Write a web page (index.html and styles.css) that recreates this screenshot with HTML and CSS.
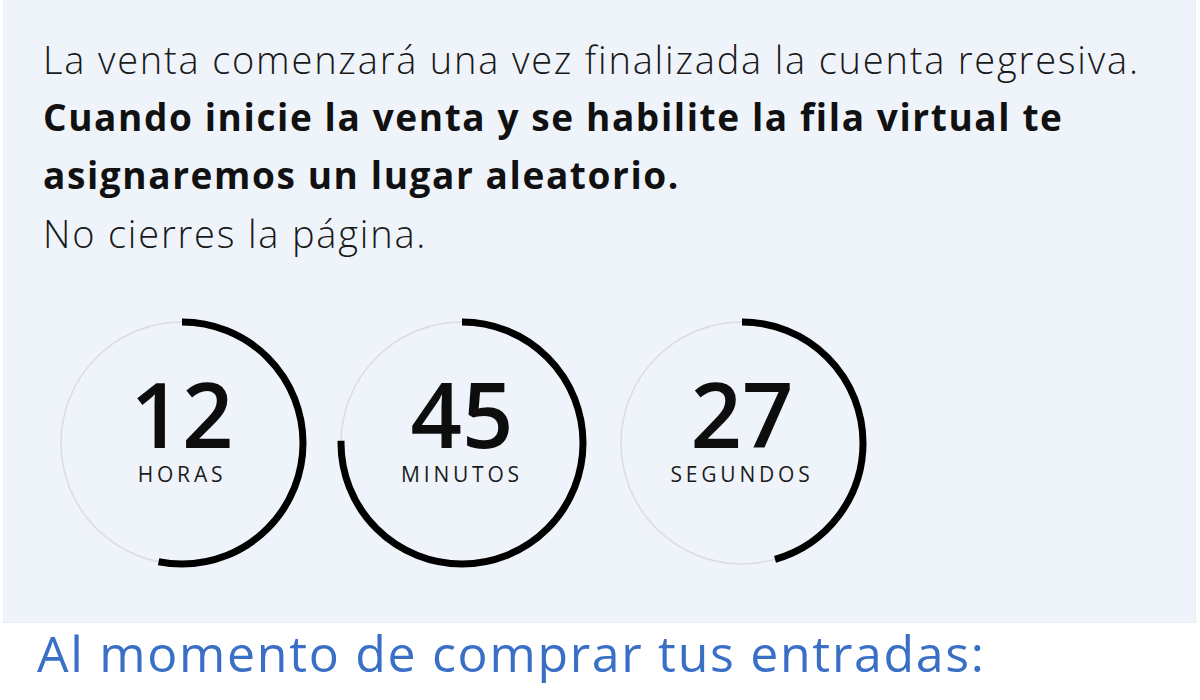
FILE: index.html
```html
<!DOCTYPE html>
<html lang="es">
<head>
  <meta charset="UTF-8">
  <title>Cuenta regresiva – Fila virtual</title>
  <link rel="stylesheet" href="styles.css">
</head>
<body>
  <!-- Aviso + cuenta regresiva -->
  <section class="countdown-box">
    <p class="notice">
      <span class="light">La venta comenzará una vez finalizada la cuenta regresiva.</span>
      <strong>Cuando inicie la venta y se habilite la fila virtual te asignaremos un lugar aleatorio.</strong>
      <span class="light">No cierres la página.</span>
    </p>

    <div class="timer">
      <!-- Horas: 12.75 / 24 -->
      <div class="ring">
        <svg class="ring-svg" viewBox="0 0 254 254">
          <circle class="track" cx="127" cy="127" r="121"></circle>
          <circle class="bar" cx="127" cy="127" r="121" pathLength="100" stroke-dasharray="53.1 100"></circle>
        </svg>
        <span class="ring-value">12</span>
        <span class="ring-label">HORAS</span>
      </div>
      <!-- Minutos: 45.45 / 60 -->
      <div class="ring">
        <svg class="ring-svg" viewBox="0 0 254 254">
          <circle class="track" cx="127" cy="127" r="121"></circle>
          <circle class="bar" cx="127" cy="127" r="121" pathLength="100" stroke-dasharray="75.3 100"></circle>
        </svg>
        <span class="ring-value">45</span>
        <span class="ring-label">MINUTOS</span>
      </div>
      <!-- Segundos: 27 / 60 -->
      <div class="ring">
        <svg class="ring-svg" viewBox="0 0 254 254">
          <circle class="track" cx="127" cy="127" r="121"></circle>
          <circle class="bar" cx="127" cy="127" r="121" pathLength="100" stroke-dasharray="45.6 100"></circle>
        </svg>
        <span class="ring-value">27</span>
        <span class="ring-label">SEGUNDOS</span>
      </div>
    </div>
  </section>

  <h2 class="section-title">Al momento de comprar tus entradas:</h2>
</body>
</html>
```

FILE: styles.css
```css
/* Base */
body {
  margin: 0;
  padding: 0;
  background: #ffffff;
  font-family: "Open Sans", "Noto Sans", sans-serif;
  color: #111111;
}

/* Caja celeste con el aviso y el reloj */
.countdown-box {
  margin: 0 4px 0 3px;
  height: 623px;
  box-sizing: border-box;
  padding: 30px 40px 0 40px;
  background-color: #eff4fb;
  border-right: 1px solid #e4ebf5;
  border-bottom: 1px solid #e4ebf5;
}

.notice {
  margin: 0;
  font-size: 38px;
  line-height: 58px;
}
.notice span,
.notice strong {
  display: block;
}
.notice .light {
  font-weight: 300;
  letter-spacing: 1.8px;
  color: #1a1a1a;
}
.notice strong {
  font-weight: 700;
  font-size: 37px;
  letter-spacing: 1.6px;
  color: #111111;
}

/* Fila de anillos */
.timer {
  display: flex;
  gap: 26px;
  margin: 54px 0 0 12px;
}

.ring {
  position: relative;
  width: 254px;
  height: 254px;
  display: flex;
  flex-direction: column;
  align-items: center;
  justify-content: center;
  padding-bottom: 21px;
  box-sizing: border-box;
}
.ring-svg {
  position: absolute;
  left: 0;
  top: 0;
  width: 254px;
  height: 254px;
  transform: rotate(-90deg);
}
.ring-svg circle {
  fill: none;
}
.ring-svg .track {
  stroke: #d9dde2;
  stroke-width: 1.5;
}
.ring-svg .bar {
  stroke: #000000;
  stroke-width: 7;
}

.ring-value {
  position: relative;
  font-size: 90px;
  line-height: 70px;
  font-weight: 600;
  color: #0d0d0d;
}
.ring-label {
  position: relative;
  margin-top: 14px;
  font-size: 21px;
  line-height: 25px;
  letter-spacing: 3.8px;
  color: #1c1c1c;
}

/* Titulo inferior */
.section-title {
  margin: 0;
  padding-left: 37px;
  font-size: 50px;
  line-height: 60px;
  font-weight: 400;
  letter-spacing: 1.7px;
  color: #3a6fc6;
}
```
